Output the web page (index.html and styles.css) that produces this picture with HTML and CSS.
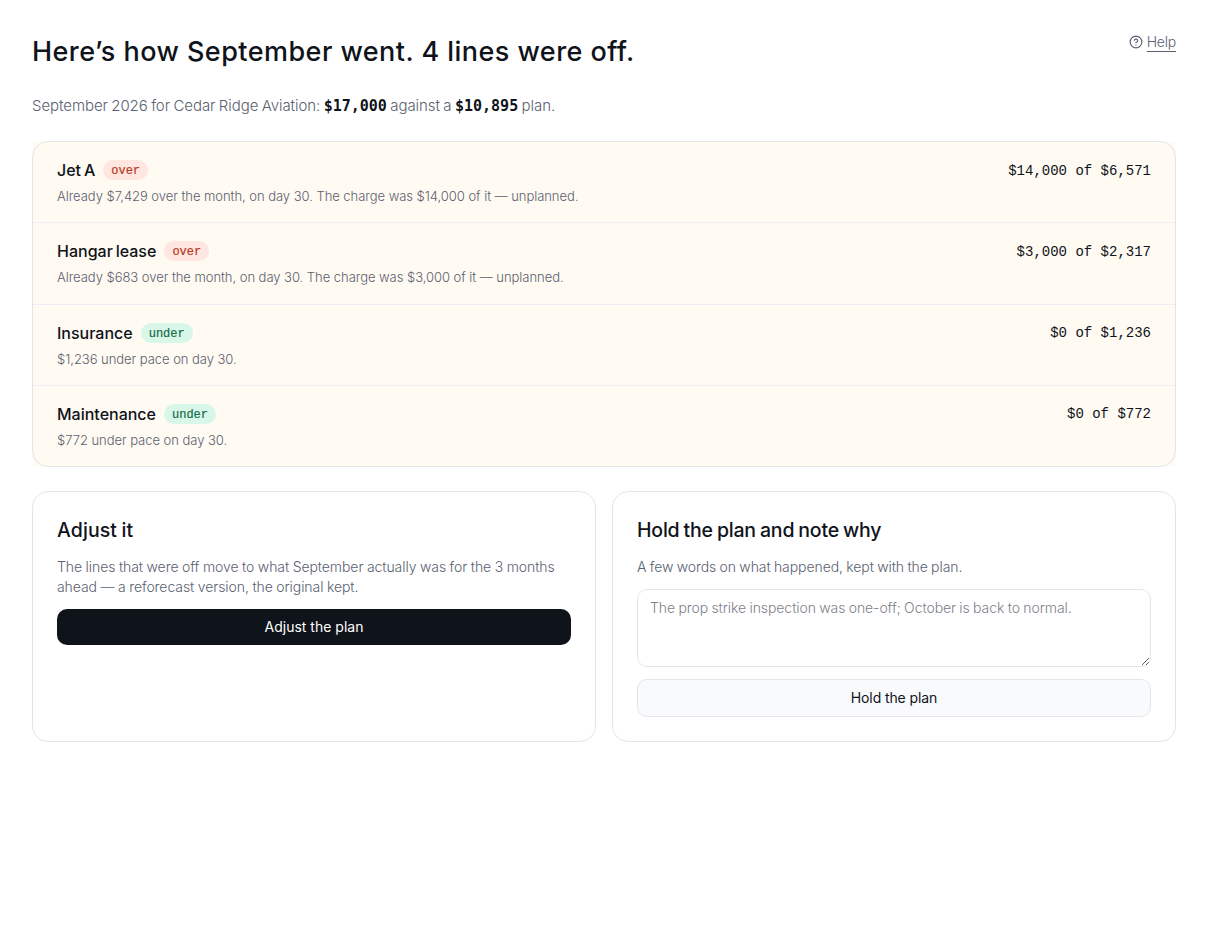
FILE: index.html
```html
<!DOCTYPE html>
<html lang="en">
<head>
    <meta charset="UTF-8">
    <meta name="viewport" content="width=device-width, initial-scale=1.0">
    <title>September review - Cedar Ridge Aviation</title>
    <link rel="stylesheet" href="styles.css">
</head>
<body>
    <main class="page">
        <header class="page-header">
            <h1 class="page-title">Here’s how September went. 4 lines were off.</h1>
            <a class="help-link" href="#">
                <svg class="help-icon" viewBox="0 0 24 24" fill="none" stroke="currentColor" stroke-width="2" stroke-linecap="round" stroke-linejoin="round">
                    <circle cx="12" cy="12" r="10"/>
                    <path d="M9.09 9a3 3 0 0 1 5.83 1c0 2-3 3-3 3"/>
                    <path d="M12 17h.01"/>
                </svg>
                <span class="help-text">Help</span>
            </a>
        </header>

        <p class="summary">September 2026 for Cedar Ridge Aviation: <strong>$17,000</strong> against a <strong>$10,895</strong> plan.</p>

        <!-- Lines that were off -->
        <section class="lines">
            <div class="line">
                <div class="line-info">
                    <div class="line-name">Jet A <span class="badge over">over</span></div>
                    <p class="line-note">Already $7,429 over the month, on day 30. The charge was $14,000 of it — unplanned.</p>
                </div>
                <div class="line-amount">$14,000 of $6,571</div>
            </div>
            <div class="line">
                <div class="line-info">
                    <div class="line-name">Hangar lease <span class="badge over">over</span></div>
                    <p class="line-note">Already $683 over the month, on day 30. The charge was $3,000 of it — unplanned.</p>
                </div>
                <div class="line-amount">$3,000 of $2,317</div>
            </div>
            <div class="line">
                <div class="line-info">
                    <div class="line-name">Insurance <span class="badge under">under</span></div>
                    <p class="line-note">$1,236 under pace on day 30.</p>
                </div>
                <div class="line-amount">$0 of $1,236</div>
            </div>
            <div class="line">
                <div class="line-info">
                    <div class="line-name">Maintenance <span class="badge under">under</span></div>
                    <p class="line-note">$772 under pace on day 30.</p>
                </div>
                <div class="line-amount">$0 of $772</div>
            </div>
        </section>

        <!-- What to do about it -->
        <div class="choices">
            <section class="card card-adjust">
                <h2>Adjust it</h2>
                <p>The lines that were off move to what September actually was for the 3 months ahead — a reforecast version, the original kept.</p>
                <button type="button" class="btn btn-primary">Adjust the plan</button>
            </section>
            <form class="card card-hold">
                <h2>Hold the plan and note why</h2>
                <p>A few words on what happened, kept with the plan.</p>
                <textarea name="note" placeholder="The prop strike inspection was one-off; October is back to normal."></textarea>
                <button type="button" class="btn btn-secondary">Hold the plan</button>
            </form>
        </div>
    </main>
</body>
</html>
```
FILE: styles.css
```css
:root {
    --ink: #0f131a;
    --muted: #5a6170;
    --border: #e3e5ea;
    --cream: #fffaf2;
    --mono: "Liberation Mono", monospace;
}

* {
    margin: 0;
    padding: 0;
    box-sizing: border-box;
}

body {
    background: #fff;
    color: var(--ink);
    font-family: Inter, sans-serif;
    font-size: 14px;
    line-height: 1.45;
}

.page {
    padding: 32px;
}

.page-header {
    display: flex;
    justify-content: space-between;
    align-items: flex-start;
    margin-bottom: 22px;
}

.page-title {
    font-size: 27px;
    font-weight: 500;
    line-height: 40px;
    letter-spacing: 0.45px;
    white-space: nowrap;
}

.help-link {
    display: flex;
    align-items: center;
    gap: 4px;
    color: var(--muted);
    text-decoration: none;
    font-weight: 300;
    letter-spacing: -0.2px;
}

.help-icon {
    width: 14px;
    height: 14px;
}

.help-text {
    border-bottom: 1px solid var(--muted);
    line-height: 19px;
}

.summary {
    height: 23px;
    margin-bottom: 24px;
    color: var(--muted);
    font-size: 15px;
    font-weight: 300;
    line-height: 23px;
    letter-spacing: -0.07px;
    word-spacing: -0.7px;
}

.summary strong {
    color: var(--ink);
    font-family: "DejaVu Sans Mono", monospace;
    font-weight: 700;
    letter-spacing: 0;
}

.lines {
    position: relative;
    margin-bottom: 24px;
    padding: 1px;
}

/* outline sits above the row backgrounds */
.lines::after {
    content: "";
    position: absolute;
    inset: 0;
    border: 1px solid var(--border);
    border-radius: 16px;
    pointer-events: none;
}

.line {
    display: flex;
    justify-content: space-between;
    align-items: flex-start;
    padding: 16px 24px;
    background: var(--cream);
    border-bottom: 1px solid #eceef1;
}

.line:last-child {
    border-bottom: none;
}

.line-name {
    display: flex;
    align-items: center;
    gap: 8px;
    margin-bottom: 4px;
    font-size: 16px;
    font-weight: 500;
    line-height: 24px;
    word-spacing: -1.4px;
}

.badge {
    height: 20px;
    padding: 1px 8px 0;
    border-radius: 10px;
    font-family: var(--mono);
    font-size: 12px;
    line-height: 20px;
    -webkit-text-stroke: 0.2px currentColor;
}

.over {
    background: #ffe6e1;
    color: #b83a22;
}

.under {
    background: #d9f7e8;
    color: #176b48;
}

.line-note {
    color: var(--muted);
    font-size: 13px;
    font-weight: 300;
    line-height: 20.3px;
    letter-spacing: -0.04px;
}

.line-amount {
    margin-top: 0.55px;
    font-family: var(--mono);
    line-height: 24px;
}

.choices {
    display: grid;
    grid-template-columns: 1fr 1fr;
    gap: 16px;
}

.card {
    display: flex;
    flex-direction: column;
    gap: 12px;
    padding: 24px;
    border: 1px solid var(--border);
    border-radius: 16px;
}

.card h2 {
    font-size: 19.5px;
    font-weight: 500;
    line-height: 29px;
    letter-spacing: -0.2px;
    word-spacing: -0.9px;
}

.card-adjust h2 {
    letter-spacing: 0.1px;
}

.card p {
    color: var(--muted);
    font-weight: 300;
    line-height: 20px;
    letter-spacing: -0.07px;
    word-spacing: -0.5px;
}

.card-adjust p {
    word-spacing: -0.3px;
}

.card textarea {
    height: 78px;
    padding: 8px 12px;
    border: 1px solid var(--border);
    border-radius: 10px;
    font: inherit;
    font-weight: 300;
    letter-spacing: -0.07px;
    word-spacing: -0.5px;
    resize: vertical;
}

.card textarea::placeholder {
    color: #7d8189;
}

.btn {
    height: 36px;
    border: none;
    border-radius: 10px;
    font: inherit;
    cursor: pointer;
}

.btn-primary {
    background: var(--ink);
    color: #fff;
}

.btn-secondary {
    height: 38px;
    border: 1px solid var(--border);
    background: #f9fafc;
    color: var(--ink);
    letter-spacing: -0.1px;
}
```
